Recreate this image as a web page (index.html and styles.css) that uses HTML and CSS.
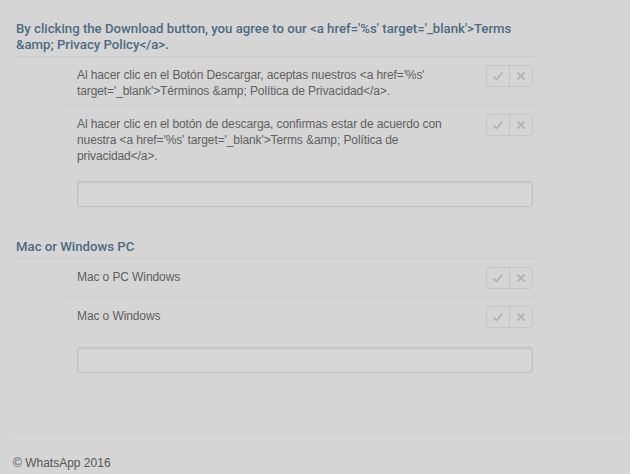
FILE: index.html
```html
<!DOCTYPE html>
<html lang="en">
<head>
<meta charset="utf-8">
<title>Translations</title>
<link rel="stylesheet" href="styles.css">
</head>
<body>
<div class="page">
  <section class="group first">
    <h2 class="source">By clicking the Download button, you agree to our &lt;a href='%s' target='_blank'&gt;Terms &amp;amp; Privacy Policy&lt;/a&gt;.</h2>
    <div class="row">
      <p class="text">Al hacer clic en el Botón Descargar, aceptas nuestros &lt;a href='%s' target='_blank'&gt;Términos &amp;amp; Política de Privacidad&lt;/a&gt;.</p>
      <div class="votes">
        <span class="vote"><svg viewBox="0 0 12 12" width="12" height="12"><path d="M1.5 6.5 L4.5 9.5 L10.5 2.5" fill="none" stroke="#b4b4b4" stroke-width="1.8"/></svg></span>
        <span class="vote"><svg viewBox="0 0 12 12" width="12" height="12"><path d="M2.5 2.5 L9.5 9.5 M9.5 2.5 L2.5 9.5" fill="none" stroke="#b4b4b4" stroke-width="1.8"/></svg></span>
      </div>
    </div>
    <div class="row last">
      <p class="text">Al hacer clic en el botón de descarga, confirmas estar de acuerdo con nuestra &lt;a href='%s' target='_blank'&gt;Terms &amp;amp; Política de privacidad&lt;/a&gt;.</p>
      <div class="votes">
        <span class="vote"><svg viewBox="0 0 12 12" width="12" height="12"><path d="M1.5 6.5 L4.5 9.5 L10.5 2.5" fill="none" stroke="#b4b4b4" stroke-width="1.8"/></svg></span>
        <span class="vote"><svg viewBox="0 0 12 12" width="12" height="12"><path d="M2.5 2.5 L9.5 9.5 M9.5 2.5 L2.5 9.5" fill="none" stroke="#b4b4b4" stroke-width="1.8"/></svg></span>
      </div>
    </div>
    <div class="input"></div>
  </section>

  <section class="group second">
    <h2 class="source">Mac or Windows PC</h2>
    <div class="row">
      <p class="text">Mac o PC Windows</p>
      <div class="votes">
        <span class="vote"><svg viewBox="0 0 12 12" width="12" height="12"><path d="M1.5 6.5 L4.5 9.5 L10.5 2.5" fill="none" stroke="#b4b4b4" stroke-width="1.8"/></svg></span>
        <span class="vote"><svg viewBox="0 0 12 12" width="12" height="12"><path d="M2.5 2.5 L9.5 9.5 M9.5 2.5 L2.5 9.5" fill="none" stroke="#b4b4b4" stroke-width="1.8"/></svg></span>
      </div>
    </div>
    <div class="row last">
      <p class="text">Mac o Windows</p>
      <div class="votes">
        <span class="vote"><svg viewBox="0 0 12 12" width="12" height="12"><path d="M1.5 6.5 L4.5 9.5 L10.5 2.5" fill="none" stroke="#b4b4b4" stroke-width="1.8"/></svg></span>
        <span class="vote"><svg viewBox="0 0 12 12" width="12" height="12"><path d="M2.5 2.5 L9.5 9.5 M9.5 2.5 L2.5 9.5" fill="none" stroke="#b4b4b4" stroke-width="1.8"/></svg></span>
      </div>
    </div>
    <div class="input"></div>
  </section>
</div>
<footer class="footer">
  <p class="copy">© WhatsApp 2016</p>
</footer>
</body>
</html>
```

FILE: styles.css
```css
html, body {
  margin: 0;
  padding: 0;
  background: #d5d5d5;
}

body {
  font-family: "Liberation Sans", Arial, sans-serif;
  color: #5e5e5e;
  width: 630px;
  height: 474px;
  overflow: hidden;
}

.page {
  padding: 21px 0 0 16px;
  width: 519px;
  height: 416px;
}

.group.second {
  margin-top: 32px;
}

.source {
  margin: 0;
  font-family: Roboto, "Liberation Sans", Arial, sans-serif;
  font-size: 13.2px;
  font-weight: 500;
  line-height: 16px;
  color: #4d6b82;
  padding-bottom: 3px;
  border-bottom: 1px solid #cbcbcb;
}

.row {
  display: flex;
  align-items: flex-start;
  margin-left: 54px;
  margin-right: -5px;
  padding: 10px 7px 6px 7px;
  border-bottom: 1px solid #cbcbcb;
}

.row.last {
  border-bottom: none;
}

.text {
  flex: 1;
  margin: 0;
  font-size: 12px;
  letter-spacing: -0.1px;
  line-height: 16px;
  min-height: 22px;
  color: #606060;
  padding-right: 20px;
}

.votes {
  display: flex;
  margin-top: -2px;
  border: 1px solid #c6c6c6;
  border-radius: 4px;
  height: 20px;
}

.vote {
  width: 22px;
  height: 20px;
  display: flex;
  align-items: center;
  justify-content: center;
}

.vote + .vote {
  border-left: 1px solid #c6c6c6;
}

.input {
  margin: 11px 2px 0 61px;
  height: 24px;
  border: 1px solid #c0c0c0;
  border-radius: 3px;
  box-shadow: inset 0 1px 2px rgba(0, 0, 0, 0.08);
  background: #d6d6d6;
}

.footer {
  margin-left: 13px;
  border-top: 1px solid #d9d9d9;
  height: 37px;
}

.copy {
  margin: 0;
  padding-top: 17px;
  font-size: 12px;
  line-height: 16px;
  color: #555555;
}
```
